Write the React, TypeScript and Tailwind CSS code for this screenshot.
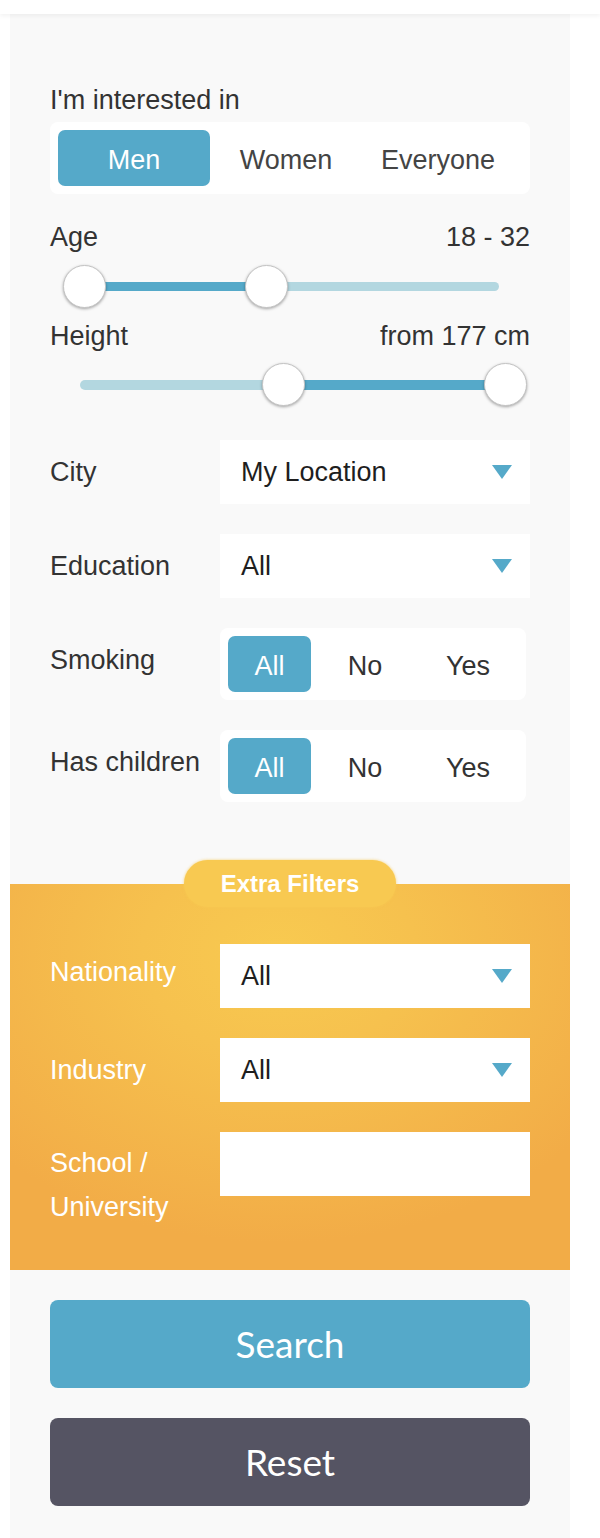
import React from "react";

const Triangle = () => (
  <svg width="20" height="14" viewBox="0 0 20 14" className="shrink-0">
    <path d="M0 0 H20 L10 14 Z" fill="#55a9c9" />
  </svg>
);

const Select = ({ value }: { value: string }) => (
  <div className="w-[310px] h-[64px] bg-white flex items-center justify-between pl-[21px] pr-[18px]">
    <span className="text-[27px] text-[#1e1e1e] leading-[32px]">{value}</span>
    <Triangle />
  </div>
);

const Handle = ({ left }: { left: string }) => (
  <div
    className={`absolute top-0 w-[43px] h-[43px] rounded-full bg-white border border-[#c4c4c4] shadow-[0_1px_3px_rgba(0,0,0,0.35)] ${left}`}
  />
);

const YesNo = () => (
  <div className="w-[306px] h-[72px] bg-white rounded-[8px] p-[8px] flex items-center">
    <div className="w-[83px] h-[56px] pt-[5px] rounded-[7px] bg-[#55a9c9] text-white flex items-center justify-center text-[27px]">
      All
    </div>
    <div className="w-[108px] h-[56px] pt-[5px] flex items-center justify-center text-[27px] text-[#333]">
      No
    </div>
    <div className="w-[98px] h-[56px] pt-[5px] flex items-center justify-center text-[27px] text-[#333]">
      Yes
    </div>
  </div>
);

export default function App() {
  return (
    <div className="w-[600px] min-h-[1538px] bg-white font-['Liberation_Sans',Arial,sans-serif] text-[#333]">
      <div className="relative z-10 h-[14px] bg-white shadow-[0_2px_4px_rgba(0,0,0,0.05)]" />
      <div className="ml-[10px] w-[560px] bg-[#f9f9f9] pb-[32px]">
        <div className="px-[40px] pt-[70px]">
          <div className="text-[27px] leading-[32px]">I'm interested in</div>
          <div className="mt-[6px] h-[72px] bg-white rounded-[8px] p-[8px] flex items-center">
            <div className="w-[152px] h-[56px] pt-[4px] rounded-[7px] bg-[#55a9c9] text-white flex items-center justify-center text-[27px]">
              Men
            </div>
            <div className="w-[152px] h-[56px] pt-[4px] flex items-center justify-center text-[27px] text-[#444]">
              Women
            </div>
            <div className="w-[152px] h-[56px] pt-[4px] flex items-center justify-center text-[27px] text-[#444]">
              Everyone
            </div>
          </div>

          <div className="mt-[27px] flex justify-between text-[27px] leading-[32px]">
            <span>Age</span>
            <span>18 - 32</span>
          </div>
          <div className="mt-[12px] ml-[13px] w-[436px] h-[43px] relative">
            <div className="absolute left-[7px] right-0 top-[17px] h-[9px] rounded-full bg-[#b3d7e0]" />
            <div className="absolute left-[22px] w-[181px] top-[17px] h-[9px] bg-[#55a9c9]" />
            <Handle left="left-0" />
            <Handle left="left-[182px]" />
          </div>

          <div className="mt-[12px] flex justify-between text-[27px] leading-[32px]">
            <span>Height</span>
            <span>from 177 cm</span>
          </div>
          <div className="mt-[11px] ml-[30px] w-[447px] h-[43px] relative">
            <div className="absolute left-0 w-[440px] top-[17px] h-[10px] rounded-full bg-[#b3d7e0]" />
            <div className="absolute left-[203px] w-[222px] top-[17px] h-[10px] bg-[#55a9c9]" />
            <Handle left="left-[182px]" />
            <Handle left="left-[404px]" />
          </div>

          <div className="mt-[34px] flex flex-col">
            <div className="flex items-start">
              <div className="w-[170px] pt-[10px] text-[27px] leading-[44px]">City</div>
              <Select value="My Location" />
            </div>
            <div className="mt-[30px] flex items-start">
              <div className="w-[170px] pt-[10px] text-[27px] leading-[44px]">Education</div>
              <Select value="All" />
            </div>
            <div className="mt-[30px] flex items-start">
              <div className="w-[170px] pt-[10px] text-[27px] leading-[44px]">Smoking</div>
              <YesNo />
            </div>
            <div className="mt-[30px] flex items-start">
              <div className="w-[170px] pt-[10px] text-[27px] leading-[44px] whitespace-nowrap">Has children</div>
              <YesNo />
            </div>
          </div>
        </div>

        <div className="mt-[82px] relative bg-[radial-gradient(ellipse_70%_75%_at_48%_18%,#f8ca50_0%,#f6c14e_35%,#f2ac47_100%)] px-[40px] pt-[60px] pb-[41px]">
          <div className="absolute -top-[24px] left-1/2 -translate-x-1/2 w-[212px] h-[47px] rounded-[24px] bg-[#f8c951] shadow-[0_0_3px_rgba(248,201,81,0.8)] flex items-center justify-center">
            <span className="text-white font-bold text-[24px] leading-none">Extra Filters</span>
          </div>
          <div className="flex flex-col gap-[30px] text-white">
            <div className="flex items-start">
              <div className="w-[170px] pt-[6px] text-[27px] leading-[44px]">Nationality</div>
              <Select value="All" />
            </div>
            <div className="flex items-start">
              <div className="w-[170px] pt-[10px] text-[27px] leading-[44px]">Industry</div>
              <Select value="All" />
            </div>
            <div className="flex items-start">
              <div className="w-[170px] pt-[9px] text-[27px] leading-[44px]">
                School /<br />University
              </div>
              <div className="w-[310px] h-[64px] bg-white" />
            </div>
          </div>
        </div>

        <div className="px-[40px] pt-[30px] flex flex-col gap-[30px]">
          <button className="h-[88px] w-full rounded-[8px] bg-[#55a9c9] text-white text-[37px] font-['Lato',sans-serif] flex items-center justify-center">
            Search
          </button>
          <button className="h-[88px] w-full rounded-[8px] bg-[#555463] text-white text-[37px] font-['Lato',sans-serif] flex items-center justify-center">
            Reset
          </button>
        </div>
      </div>
    </div>
  );
}
